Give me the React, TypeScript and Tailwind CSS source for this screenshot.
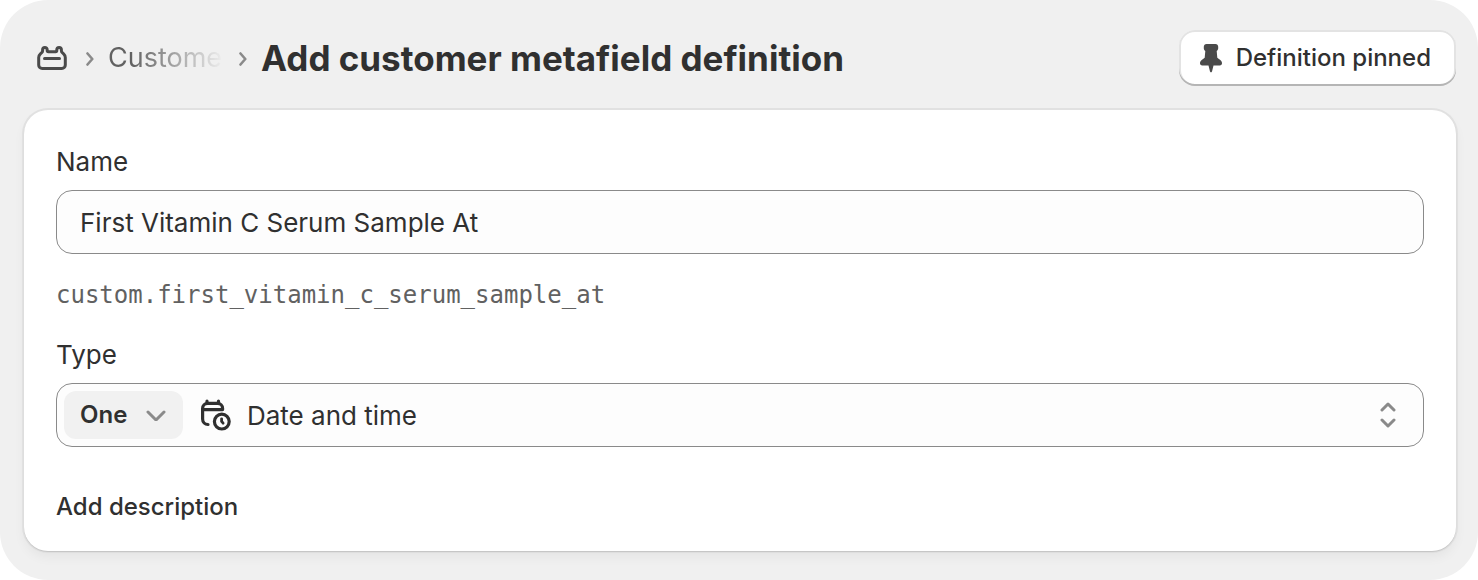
import { useState } from 'react'

function MetafieldsIcon() {
  return (
    <svg
      viewBox="0 0 32 26"
      className="h-[26px] w-8"
      fill="none"
      stroke="#4a4a4a"
      strokeWidth="3"
      strokeLinecap="round"
      strokeLinejoin="round"
      aria-hidden="true"
    >
      <path d="M2.700 12.600c0-1.500.6-2.800 1.700-3.800l1.300-1.100c.6-.5.9-1.100.9-1.900V4.800a2.300 2.300 0 0 1 4.600 0v.7c0 .7.500 1.200 1.200 1.200h7.200c.7 0 1.200-.5 1.200-1.200v-.7a2.300 2.300 0 0 1 4.600 0v1c0 .8.300 1.400.9 1.900l1.300 1.100c1.100 1 1.700 2.300 1.700 3.800v7.400a3.500 3.500 0 0 1-3.500 3.500H6.200a3.500 3.500 0 0 1-3.500-3.500Z" />
      <path d="M8.500 13.500h15" />
    </svg>
  )
}

function CrumbChevron() {
  return (
    <svg
      viewBox="0 0 8 16"
      className="h-4 w-2 shrink-0"
      fill="none"
      stroke="#8a8a8a"
      strokeWidth="2.6"
      strokeLinecap="round"
      strokeLinejoin="round"
      aria-hidden="true"
    >
      <path d="M1.500 3.500 6.300 9l-4.800 5.500" />
    </svg>
  )
}

function PinIcon() {
  return (
    <svg viewBox="0 0 22 30" className="h-[30px] w-[22px]" fill="#4a4a4a" aria-hidden="true">
      <path d="M6.500 1h9C17.100 1 18.200 2.200 18.200 3.700v1.500c0 1.200-.6 2.200-1.500 2.800l.6 6.700 3 2.300c1.100.9 1.700 2 1.700 3.200 0 1.300-.9 2.200-2.200 2.200h-6.300l-1.500 6.200c-.3 1.100-1.700 1.100-2 0L8.500 22.400H2.200C.9 22.400 0 21.500 0 20.200c0-1.200.6-2.300 1.700-3.200l3-2.300L5.300 8c-.9-.6-1.500-1.600-1.500-2.800V3.700C3.800 2.200 4.900 1 6.500 1Z" />
    </svg>
  )
}

function CalendarTimeIcon() {
  return (
    <svg
      viewBox="0 0 32 32"
      className="size-8 shrink-0"
      fill="none"
      stroke="#303030"
      strokeWidth="3.2"
      strokeLinecap="round"
      strokeLinejoin="round"
      aria-hidden="true"
    >
      <path d="M8 25.500a5.500 5.500 0 0 1-5.400-5.500V9.400A5 5 0 0 1 7.600 4.400h10a5 5 0 0 1 5 5v1.200h-20M7 2.200v2M18.500 2.200v2" />
      <circle cx="21.800" cy="22.600" r="7.400" />
      <path d="M21.600 19.800v2.600l1.500 1.800" strokeWidth="2.800" />
    </svg>
  )
}

function ChevronDown() {
  return (
    <svg
      viewBox="0 0 20 12"
      className="pointer-events-none absolute right-[17px] h-3 w-5"
      fill="none"
      stroke="#8a8a8a"
      strokeWidth="3"
      strokeLinecap="round"
      strokeLinejoin="round"
      aria-hidden="true"
    >
      <path d="M2 3l8 8 8-8" />
    </svg>
  )
}

function SortIcon() {
  return (
    <svg
      viewBox="0 0 16 26"
      className="pointer-events-none absolute right-[27px] h-[26px] w-4"
      fill="none"
      stroke="#8a8a8a"
      strokeWidth="3"
      strokeLinecap="round"
      strokeLinejoin="round"
      aria-hidden="true"
    >
      <path d="M2 8l6-6 6 6M2 18l6 6 6-6" />
    </svg>
  )
}

function toKey(name: string) {
  return name.trim().toLowerCase().replace(/[^a-z0-9]+/g, '_')
}

export default function App() {
  const [name, setName] = useState('First Vitamin C Serum Sample At')
  const [pinned, setPinned] = useState(true)

  return (
    <main className="rounded-[48px] bg-[#f0f0f0] pt-[30px] pr-[22px] pb-[29px] pl-6 font-['Inter',sans-serif] text-[26px] text-[#303030]">
      <header className="flex items-center justify-between gap-6">
        <div className="flex min-w-0 items-center pl-3">
          <a href="#metafields" aria-label="Metafields and metaobjects">
            <MetafieldsIcon />
          </a>
          <span className="ml-[18px]">
            <CrumbChevron />
          </span>
          <a
            href="#customers"
            aria-label="Customers"
            className="ml-3.5 w-[116px] bg-linear-to-r from-[#616161] from-20% to-transparent bg-clip-text text-[27px] leading-10 whitespace-nowrap text-transparent"
          >
            Custome
          </a>
          <span className="ml-[15px]">
            <CrumbChevron />
          </span>
          <h1 className="ml-3.5 truncate text-[35px] leading-[48px] font-bold">Add customer metafield definition</h1>
        </div>
        <button
          type="button"
          aria-pressed={pinned}
          onClick={() => setPinned(!pinned)}
          className="flex h-14 shrink-0 items-center gap-3.5 rounded-2xl bg-white pr-[25px] pl-[21px] text-[24px] font-medium shadow-[inset_0_-2px_0_0_#b5b5b5,inset_0_0_0_2px_#e3e3e3]"
        >
          <PinIcon />
          {pinned ? 'Definition pinned' : 'Pin definition'}
        </button>
      </header>

      <section className="mt-6 flex flex-col items-start rounded-3xl bg-white px-8 pt-8 pb-6 shadow-[0_1px_1px_0_#c4c4c4,0_0_0_2px_#e1e1e1,0_6px_12px_0_#0000000d]">
        <label htmlFor="name" className="leading-10">
          Name
        </label>
        <input
          id="name"
          value={name}
          onChange={(event) => setName(event.target.value)}
          className="mt-2 h-16 w-full rounded-2xl border border-[#8a8a8a] bg-[#fdfdfd] px-[23px]"
        />
        <p className="mt-6 font-['DejaVu_Sans_Mono',monospace] text-[24px] leading-[34px] text-[#616161]">
          custom.{toKey(name)}
        </p>

        <label htmlFor="type" className="mt-[23px] leading-10">
          Type
        </label>
        <div className="mt-2 flex h-16 w-full items-center rounded-2xl border border-[#8a8a8a] bg-[#fdfdfd] pl-[7px]">
          <div className="relative flex items-center">
            <select
              aria-label="Number of values"
              className="h-12 w-[119px] appearance-none rounded-xl bg-[#f1f1f1] pl-4 text-[24px] font-semibold"
            >
              <option>One</option>
              <option>List</option>
            </select>
            <ChevronDown />
          </div>
          <div className="relative ml-[17px] flex h-full flex-1 items-center">
            <CalendarTimeIcon />
            <select id="type" className="h-full flex-1 appearance-none bg-transparent pl-[15px]">
              <option>Date and time</option>
              <option>Date</option>
            </select>
            <SortIcon />
          </div>
        </div>

        <button type="button" className="mt-10 text-[24px] leading-10 font-medium">
          Add description
        </button>
      </section>
    </main>
  )
}
